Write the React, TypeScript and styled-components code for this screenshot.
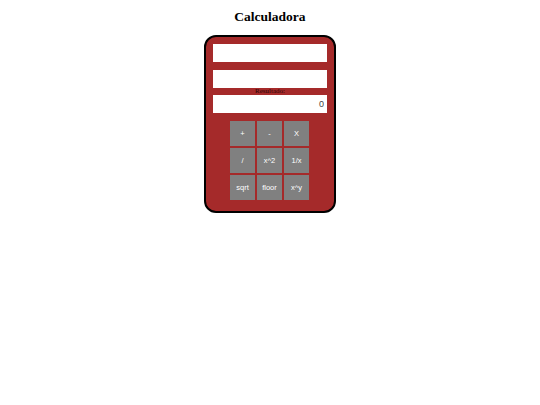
import React, { useState } from "react";
import styled, { createGlobalStyle } from "styled-components";

const GlobalStyle = createGlobalStyle`
  html, body {
    margin: 0;
    padding: 0;
    background: #fff;
  }
`;

const keys = ["+", "-", "X", "/", "x^2", "1/x", "sqrt", "floor", "x^y"];

const App = () => {
  const [a, setA] = useState("");
  const [b, setB] = useState("");
  return (
    <Page>
      <GlobalStyle />
      <Title>Calculadora</Title>
      <Card>
        <Field value={a} onChange={(e) => setA(e.target.value)} />
        <Field value={b} onChange={(e) => setB(e.target.value)} />
        <ResultBlock>
          <Label>Resultado:</Label>
          <Field value="0" readOnly align="right" />
        </ResultBlock>
        <Keys>
          {keys.map((k) => (
            <Key key={k}>{k}</Key>
          ))}
        </Keys>
      </Card>
    </Page>
  );
};

export default App;

const Page = styled.div`
  display: flex;
  flex-direction: column;
  align-items: center;
  padding-top: 7px;
`;

const Title = styled.h1`
  margin: 0;
  height: 19px;
  line-height: 19px;
  font-family: "Liberation Serif", serif;
  font-size: 13.5px;
  font-weight: bold;
  color: #000;
`;

const Card = styled.div`
  margin-top: 9px;
  width: 132px;
  height: 178px;
  box-sizing: border-box;
  border: 2px solid #000;
  border-radius: 12px;
  background: #a52a2a;
  padding: 7px;
  display: flex;
  flex-direction: column;
  gap: 8px;
`;

const Field = styled.input<{ align?: string }>`
  width: 114px;
  height: 18px;
  box-sizing: border-box;
  margin: 0;
  border: 1px solid rgba(255, 255, 255, 0.45);
  background: #fff;
  padding: 0 2px;
  font-family: "Liberation Sans", Arial, sans-serif;
  font-size: 9px;
  color: #444;
  text-align: ${({ align }) => align || "left"};
  outline: none;
`;

const ResultBlock = styled.div`
  display: flex;
  flex-direction: column;
  align-items: center;
  margin-top: -8px;
`;

const Label = styled.div`
  height: 7px;
  line-height: 7px;
  font-family: "Liberation Serif", serif;
  font-size: 7px;
  color: #2a0505;
`;

const Keys = styled.div`
  display: grid;
  grid-template-columns: repeat(3, 25px);
  grid-auto-rows: 25px;
  gap: 2px;
  padding-left: 17px;
`;

const Key = styled.button`
  margin: 0;
  padding: 0;
  border: none;
  background: #808080;
  color: #fff;
  font-family: "Liberation Sans", Arial, sans-serif;
  font-size: 7.5px;
  cursor: pointer;
`;
